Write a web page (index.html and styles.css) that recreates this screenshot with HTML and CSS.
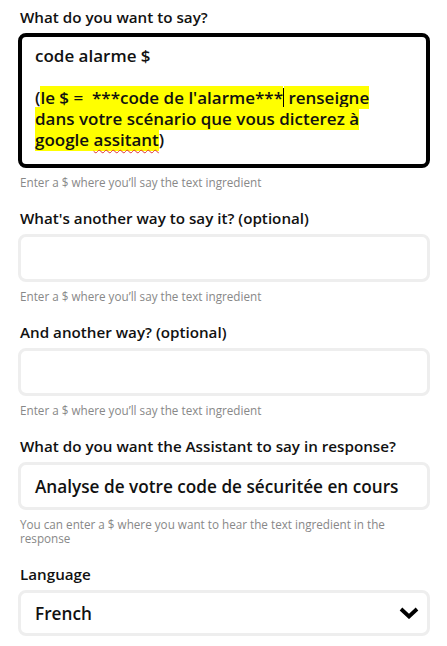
FILE: index.html
```html
<!DOCTYPE html>
<html>
<head>
<meta charset="utf-8">
<link rel="stylesheet" href="styles.css">
</head>
<body>
<div class="form">
  <div class="field first">
    <div class="label">What do you want to say?</div>
    <div class="box active">
      <div class="line">code alarme $</div>
      <div class="line">&nbsp;</div>
      <div class="line">(<mark>le $ =&nbsp; ***code de l'alarme***</mark><span class="caret"></span><mark> renseigne</mark></div>
      <div class="line"><mark>dans votre scénario que vous dicterez à</mark></div>
      <div class="line"><mark>google <span class="spell">assitant</span></mark>)</div>
    </div>
    <div class="help">Enter a $ where you’ll say the text ingredient</div>
  </div>
  <div class="field">
    <div class="label">What's another way to say it? (optional)</div>
    <div class="box input"></div>
    <div class="help">Enter a $ where you’ll say the text ingredient</div>
  </div>
  <div class="field">
    <div class="label">And another way? (optional)</div>
    <div class="box input"></div>
    <div class="help">Enter a $ where you’ll say the text ingredient</div>
  </div>
  <div class="field">
    <div class="label">What do you want the Assistant to say in response?</div>
    <div class="box input">Analyse de votre code de sécuritée en cours</div>
    <div class="help">You can enter a $ where you want to hear the text ingredient in the response</div>
  </div>
  <div class="field">
    <div class="label">Language</div>
    <div class="box select">
      <span>French</span>
      <svg class="chev" width="20" height="12" viewBox="0 0 20 12"><path d="M2 2 L10 9.5 L18 2" fill="none" stroke="#000" stroke-width="3.8"/></svg>
    </div>
  </div>
</div>
</body>
</html>
```
FILE: styles.css
```css
html, body { margin: 0; padding: 0; background: #fff; }
body { font-family: "Open Sans", "Noto Sans", sans-serif; color: #000; }
.form { padding: 0 17px 0 18px; width: 412px; }
.field { margin-top: 19px; }
.field.first { margin-top: 7px; }
.label { font-size: 15.2px; font-weight: 600; line-height: 20px; margin: 0 0 0 2px; color: #111; }
.box { margin-top: 6px; border-radius: 8px; box-sizing: border-box; font-size: 17.2px; font-weight: 600; color: #111; }
.box.active { border: 4px solid #000; padding: 8px 13px 13px 13px; height: 135px; }
.box.input { border: 3px solid #eeeeee; height: 48px; padding: 0 14px; display: flex; align-items: center; }
.box.select { border: 3px solid #eeeeee; height: 46px; padding: 0 8px 0 14px; display: flex; align-items: center; justify-content: space-between; }
.line { line-height: 21px; font-size: 17px; white-space: nowrap; }
mark { background: #ffff00; color: #111; }
.caret { display: inline-block; width: 1px; height: 20px; background: #000; vertical-align: -4px; }
.spell { text-decoration: underline wavy #e03030; text-decoration-thickness: 1px; text-underline-offset: 3px; }
.help { font-size: 11.7px; color: #888; margin: 7px 0 0 2px; line-height: 14px; width: 390px; }
.chev { display: block; }
```
